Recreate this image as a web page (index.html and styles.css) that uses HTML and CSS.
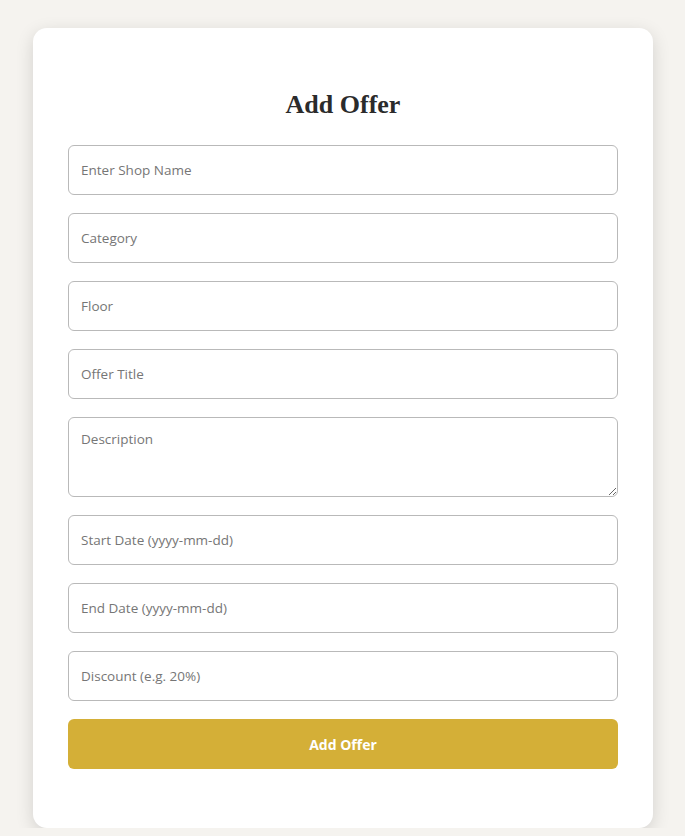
FILE: index.html
```html
<!DOCTYPE html>
<html>
<head>
<meta charset="utf-8">
<link rel="stylesheet" href="styles.css">
</head>
<body>
<div class="page">
  <div class="card">
    <h2 class="title">Add Offer</h2>
    <form class="form">
      <input class="field" type="text" placeholder="Enter Shop Name">
      <input class="field" type="text" placeholder="Category">
      <input class="field" type="text" placeholder="Floor">
      <input class="field" type="text" placeholder="Offer Title">
      <textarea class="field area" placeholder="Description"></textarea>
      <input class="field" type="text" placeholder="Start Date (yyyy-mm-dd)">
      <input class="field" type="text" placeholder="End Date (yyyy-mm-dd)">
      <input class="field" type="text" placeholder="Discount (e.g. 20%)">
      <button class="btn" type="button">Add Offer</button>
    </form>
  </div>
</div>
</body>
</html>
```
FILE: styles.css
```css
* { box-sizing: border-box; }
html, body { margin: 0; padding: 0; }
body {
  background: #f5f3ef;
  font-family: "Open Sans", sans-serif;
}
.page {
  padding: 28px 32px 0 33px;
}
.card {
  width: 620px;
  background: #ffffff;
  border-radius: 14px;
  box-shadow: 0 5px 18px rgba(0, 0, 0, 0.14);
  padding: 62px 35px 59px;
}
.title {
  margin: 0 0 25px;
  text-align: center;
  font-family: "Liberation Serif", serif;
  font-weight: bold;
  font-size: 26px;
  line-height: 30px;
  color: #2b2b2b;
}
.form {
  display: flex;
  flex-direction: column;
  gap: 18px;
}
.field {
  display: block;
  width: 100%;
  height: 50px;
  border: 1px solid #b9b9b9;
  border-radius: 6px;
  padding: 0 12px;
  font-family: "Open Sans", sans-serif;
  font-size: 13.5px;
  color: #333;
  background: #fff;
  outline: none;
}
.field::placeholder { color: #767676; }
.area {
  height: 80px;
  padding: 12px 12px;
  resize: vertical;
}
.btn {
  height: 50px;
  border: none;
  border-radius: 6px;
  background: #d4af37;
  color: #fff;
  font-family: "Open Sans", sans-serif;
  font-weight: bold;
  font-size: 14px;
  cursor: pointer;
}
```
